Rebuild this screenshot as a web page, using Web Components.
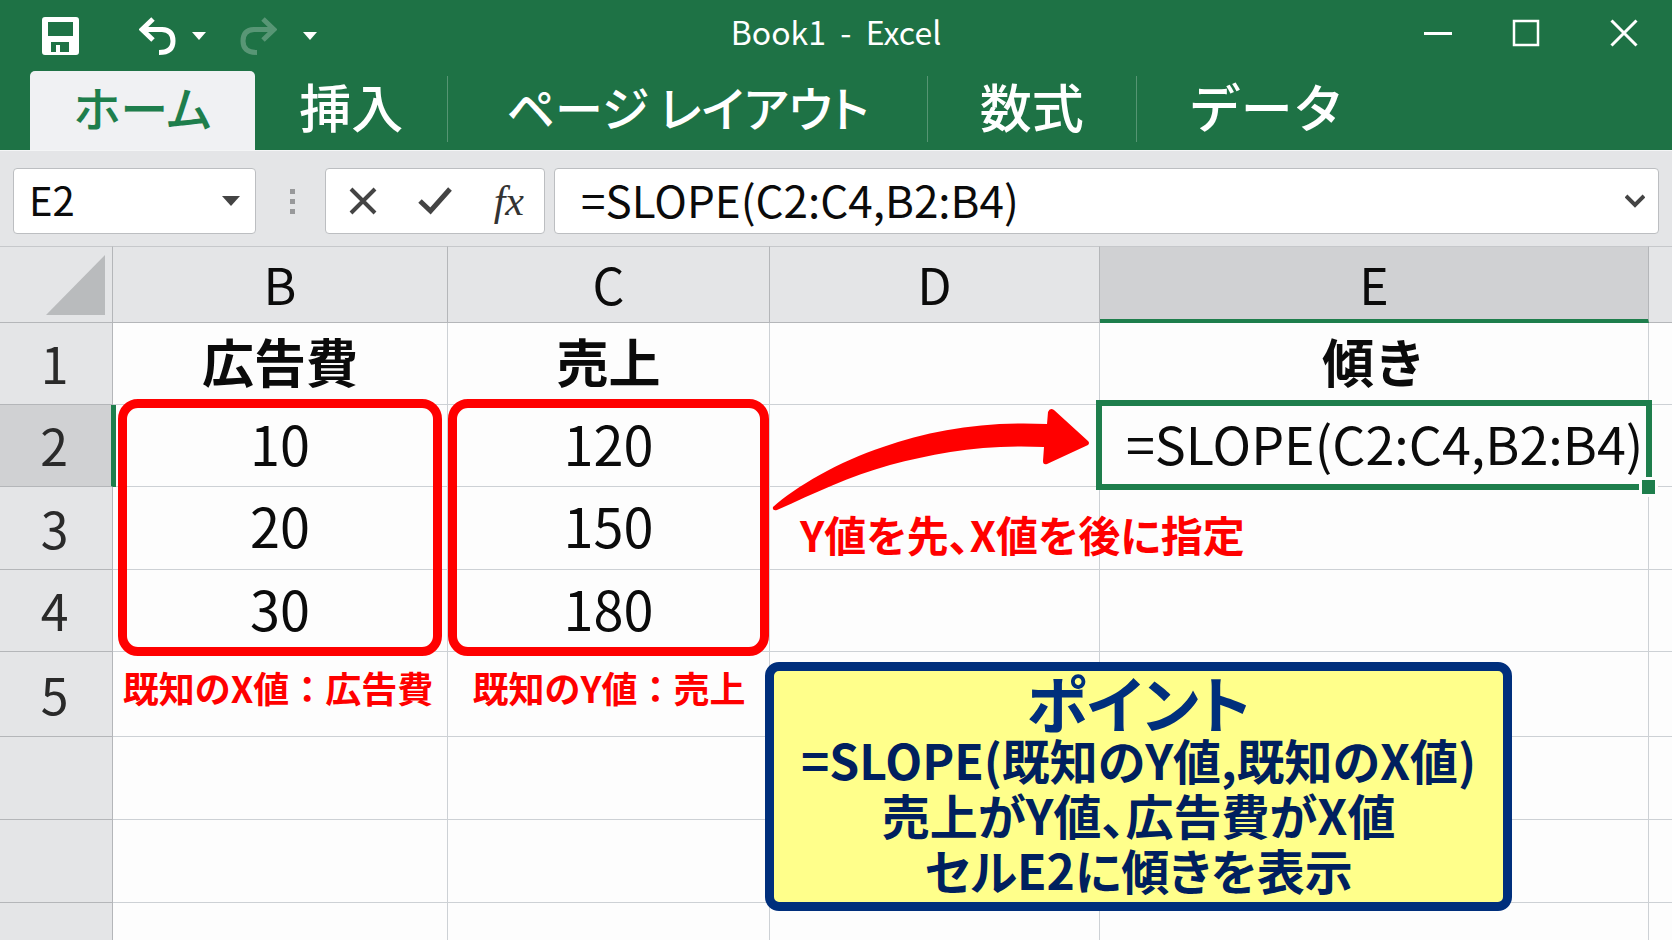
<!DOCTYPE html>
<html lang="ja">
<head>
<meta charset="utf-8">
<meta name="viewport" content="width=device-width, initial-scale=1">
<title>Book1 - Excel</title>
<style>
  * { box-sizing: border-box; }
  body {
    margin: 0;
    height: 100vh;
    overflow: hidden;
    background: #fdfdfd;
    color: #0b0b0b;
    font-family: "Noto Sans CJK JP", "Noto Sans", sans-serif;
    --green: #1e7245;
    --accent: #1e7e4c;
    --chrome: #e4e5e7;
    --chrome-active: #d0d1d3;
    --line: #cdd1d5;
    --line-dark: #b4b6b9;
    --red: #ff0000;
    --navy: #002f7c;
  }
</style>
</head>
<body>
<excel-window>
  <title-bar slot="title">Book1&nbsp; -&nbsp; Excel</title-bar>
  <ribbon-tabs slot="ribbon">
    <ribbon-tab active compact>ホーム</ribbon-tab>
    <ribbon-tab divider>挿入</ribbon-tab>
    <ribbon-tab divider compact class="wide">ページ レイアウト</ribbon-tab>
    <ribbon-tab divider class="medium">数式</ribbon-tab>
    <ribbon-tab class="medium">データ</ribbon-tab>
  </ribbon-tabs>
  <formula-bar slot="formula" cell="E2" value="=SLOPE(C2:C4,B2:B4)"></formula-bar>
  <sheet-grid>
    <range-frame class="x-range"></range-frame>
    <range-frame class="y-range"></range-frame>
    <red-note class="x-note">既知のX値：広告費</red-note>
    <red-note class="y-note">既知のY値：売上</red-note>
    <curved-arrow class="arrow"></curved-arrow>
    <red-note class="order-note" large>Y値を先、X値を後に指定</red-note>
    <active-cell class="active"></active-cell>
    <point-card class="point">
      <span slot="heading">ポイント</span>
      <p>=SLOPE(既知のY値,既知のX値)</p>
      <p>売上がY値、広告費がX値</p>
      <p>セルE2に傾きを表示</p>
    </point-card>
  </sheet-grid>
</excel-window>

<script>
class ExcelWindow extends HTMLElement {
  constructor() {
    super();
    this.attachShadow({ mode: "open" });
    this.shadowRoot.innerHTML = `
      <style>
        :host {
          display: flex;
          flex-direction: column;
          height: 100%;
        }
        header {
          background: var(--green);
        }
        main {
          flex: 1;
          min-height: 0;
          display: flex;
        }
      </style>
      <header>
        <slot name="title"></slot>
        <slot name="ribbon"></slot>
      </header>
      <slot name="formula"></slot>
      <main><slot></slot></main>
    `;
  }
}

class TitleBar extends HTMLElement {
  constructor() {
    super();
    this.attachShadow({ mode: "open" });
    this.shadowRoot.innerHTML = `
      <style>
        :host {
          display: grid;
          grid-template-columns: 1fr auto 1fr;
          align-items: center;
          height: 71px;
          color: #fff;
        }
        .quick, .controls {
          display: flex;
          align-items: center;
        }
        .quick { padding-left: 42px; }
        .controls {
          justify-content: flex-end;
          gap: 60px;
          padding: 0 34px 6px 0;
        }
        h1 {
          margin: 0;
          padding-bottom: 10px;
          font-size: 32px;
          line-height: 40px;
          font-weight: 400;
          white-space: pre;
        }
        button {
          display: block;
          padding: 0;
          border: 0;
          background: none;
          color: inherit;
        }
        svg { display: block; }
        .undo { margin-left: 60px; }
        .redo { margin-left: 34px; opacity: 0.26; }
        .menu { margin-left: 16px; }
        .customize { margin-left: 26px; }
        .close { margin-left: 10px; }
      </style>
      <div class="quick">
        <button aria-label="上書き保存">
          <svg width="37" height="38" viewBox="0 0 37 38">
            <path fill="currentColor" fill-rule="evenodd" d="M3 0H34Q37 0 37 3V35Q37 38 34 38H3Q0 38 0 35V3Q0 0 3 0ZM6 5V19H31V5ZM9 25V35H14V28H18V35H27V25Z"/>
          </svg>
        </button>
        <button class="undo" aria-label="元に戻す">
          <svg width="37" height="38" viewBox="0 0 37 38" fill="none" stroke="currentColor" stroke-width="5">
            <path d="M14 2L3 12.500L14 23M3 12.500H23Q34 13 34 24Q34 35.500 20 35.500"/>
          </svg>
        </button>
        <button class="menu" aria-label="元に戻す履歴">
          <svg width="14" height="8" viewBox="0 0 14 8"><path fill="currentColor" d="M0 0H14L7 8Z"/></svg>
        </button>
        <button class="redo" aria-label="やり直し" disabled>
          <svg width="37" height="38" viewBox="0 0 37 38" fill="none" stroke="currentColor" stroke-width="5">
            <path d="M23 2L34 12.500L23 23M34 12.500H14Q3 13 3 24Q3 35.500 17 35.500"/>
          </svg>
        </button>
        <button class="customize" aria-label="クイック アクセス ツール バーのカスタマイズ">
          <svg width="14" height="8" viewBox="0 0 14 8"><path fill="currentColor" d="M0 0H14L7 8Z"/></svg>
        </button>
      </div>
      <h1><slot></slot></h1>
      <div class="controls">
        <button aria-label="最小化">
          <svg width="28" height="28" viewBox="0 0 28 28"><path fill="currentColor" d="M0 13H28V16H0Z"/></svg>
        </button>
        <button aria-label="最大化">
          <svg width="28" height="28" viewBox="0 0 28 28" fill="none" stroke="currentColor" stroke-width="2.500"><path d="M2 2H26V26H2Z"/></svg>
        </button>
        <button class="close" aria-label="閉じる">
          <svg width="28" height="28" viewBox="0 0 28 28" fill="none" stroke="currentColor" stroke-width="3"><path d="M1.500 1.500L26.500 26.500M26.500 1.500L1.500 26.500"/></svg>
        </button>
      </div>
    `;
  }
}

class RibbonTabs extends HTMLElement {
  constructor() {
    super();
    this.attachShadow({ mode: "open" });
    this.shadowRoot.innerHTML = `
      <style>
        :host { display: block; }
        nav {
          display: flex;
          height: 79px;
          padding-left: 30px;
        }
      </style>
      <nav aria-label="リボン"><slot></slot></nav>
    `;
  }
}

class RibbonTab extends HTMLElement {
  constructor() {
    super();
    this.attachShadow({ mode: "open" });
    this.shadowRoot.innerHTML = `
      <style>
        :host {
          display: flex;
          color: #fff;
        }
        button {
          display: flex;
          align-items: center;
          padding: 0 44px 10px;
          border: 0;
          border-radius: 5px 5px 0 0;
          background: none;
          color: inherit;
          font: inherit;
          font-size: 52px;
          font-weight: 500;
          line-height: 64px;
          white-space: nowrap;
        }
        :host(.medium) button { padding: 0 52px 10px; }
        :host(.wide) button { padding: 0 58px 10px; }
        :host([compact]) button {
          font-size: 48px;
          font-feature-settings: "palt";
        }
        :host([active]) button {
          background: #f0f1f3;
          color: var(--accent);
        }
        i { display: none; }
        :host([divider]) i {
          display: block;
          width: 1px;
          height: 66px;
          margin-top: 5px;
          background: rgba(255, 255, 255, 0.25);
        }
      </style>
      <button><slot></slot></button><i></i>
    `;
  }
}

class FormulaBar extends HTMLElement {
  constructor() {
    super();
    this.attachShadow({ mode: "open" });
  }

  connectedCallback() {
    this.shadowRoot.innerHTML = `
      <style>
        :host {
          display: flex;
          padding: 17px 13px 12px;
          background: var(--chrome);
          border-top: 1px solid #f4f5f6;
        }
        .box {
          display: flex;
          align-items: center;
          box-sizing: border-box;
          height: 66px;
          background: #fff;
          border: 1px solid #bcbec1;
          border-radius: 4px;
          color: #444;
        }
        input {
          min-width: 0;
          flex: 1;
          padding: 0 0 4px;
          border: 0;
          outline: 0;
          background: none;
          color: #0b0b0b;
          font: inherit;
          line-height: 56px;
        }
        button {
          display: block;
          padding: 0;
          border: 0;
          background: none;
          color: inherit;
        }
        svg { display: block; }
        .name {
          width: 243px;
          padding: 0 15px;
          font-size: 40px;
        }
        .grip {
          display: flex;
          flex-direction: column;
          justify-content: center;
          gap: 5px;
          padding: 0 30px 0 34px;
        }
        .grip i {
          width: 5px;
          height: 5px;
          background: #98999b;
        }
        .tools {
          width: 220px;
          justify-content: space-between;
          padding: 0 20px 0 23px;
        }
        .fx {
          color: #333;
          font: italic 42px/44px "Liberation Serif", serif;
        }
        .formula {
          flex: 1;
          margin-left: 9px;
          padding: 0 13px 0 26px;
          font-size: 44px;
        }
      </style>
      <div class="box name">
        <input aria-label="名前ボックス" value="${this.getAttribute("cell")}">
        <button aria-label="名前の一覧">
          <svg width="18" height="10" viewBox="0 0 18 10"><path fill="currentColor" d="M0 0H18L9 10Z"/></svg>
        </button>
      </div>
      <div class="grip"><i></i><i></i><i></i></div>
      <div class="box tools">
        <button aria-label="キャンセル">
          <svg width="28" height="28" viewBox="0 0 28 28" fill="none" stroke="currentColor" stroke-width="4"><path d="M2 2L26 26M26 2L2 26"/></svg>
        </button>
        <button aria-label="入力">
          <svg width="34" height="28" viewBox="0 0 34 28" fill="none" stroke="currentColor" stroke-width="5"><path d="M2 14L12.500 24L32 2"/></svg>
        </button>
        <button class="fx" aria-label="関数の挿入">fx</button>
      </div>
      <div class="box formula">
        <input aria-label="数式バー" value="${this.getAttribute("value")}">
        <button aria-label="数式バーの展開">
          <svg width="20" height="14" viewBox="0 0 20 14" fill="none" stroke="currentColor" stroke-width="4"><path d="M1 2L10 11L19 2"/></svg>
        </button>
      </div>
    `;
  }
}

class SheetGrid extends HTMLElement {
  constructor() {
    super();
    this.attachShadow({ mode: "open" });
    this.columns = ["B", "C", "D", "E", ""];
    this.rows = [
      ["1", "広告費", "売上", "", "傾き", ""],
      ["2", "10", "120", "", "=SLOPE(C2:C4,B2:B4)", ""],
      ["3", "20", "150", "", "", ""],
      ["4", "30", "180", "", "", ""],
      ["5", "", "", "", "", ""],
      ["", "", "", "", "", ""],
      ["", "", "", "", "", ""],
      ["", "", "", "", "", ""]
    ];
  }

  connectedCallback() {
    this.render();
  }

  render() {
    this.shadowRoot.innerHTML = `
      <style>
        :host {
          display: grid;
          flex: 1;
          min-width: 0;
          overflow: hidden;
        }
        /* The table and the annotation layer share one set of tracks */
        table, .layer {
          grid-area: 1 / 1;
          display: grid;
          grid-template-columns:
            minmax(0, 113fr) minmax(0, 335fr) minmax(0, 322fr)
            minmax(0, 330fr) minmax(0, 549fr) minmax(0, 23fr);
          grid-template-rows: 77px 82px 82px 83px 82px 85px 83px 83px minmax(0, 1fr);
        }
        .layer {
          position: relative;
          pointer-events: none;
        }
        thead, tbody, tr { display: contents; }
        th, td {
          display: flex;
          align-items: center;
          justify-content: center;
          min-width: 0;
          padding: 0;
          border: solid var(--line);
          border-width: 0 1px 1px 0;
          box-sizing: border-box;
          white-space: nowrap;
          font-weight: 400;
          line-height: 64px;
        }
        tr > :last-child { border-right: 0; }
        tbody tr:last-child > * { border-bottom: 0; }
        th {
          padding-bottom: 3px;
          background: var(--chrome);
          border-color: var(--line-dark);
          font-size: 50px;
        }
        thead th { border-top: 1px solid #c6c8cb; }
        tbody th { color: #2a2a2a; padding-right: 3px; }
        td {
          font-size: 54px;
          padding-bottom: 6px;
        }
        .title {
          font-size: 52px;
          font-weight: 700;
        }
        .column-on {
          padding-bottom: 0;
          background: var(--chrome-active);
          border-bottom: 4px solid var(--accent);
        }
        .row-on {
          z-index: 1;
          background: var(--chrome-active);
          border-right: 2px solid var(--accent);
          box-shadow: 3px 0 0 var(--accent);
        }
        .formula {
          justify-content: flex-start;
          padding-left: 26px;
          font-size: 52px;
        }
        .corner {
          align-items: flex-end;
          justify-content: flex-end;
          padding: 0 7px 7px 0;
        }
        .corner svg { display: block; }
        ::slotted(.x-range) { grid-area: 3 / 2 / 6 / 3; margin: -6px 6px -4px 5px; }
        ::slotted(.y-range) { grid-area: 3 / 3 / 6 / 4; margin: -6px 1px -4px 0; }
        ::slotted(.x-note) { grid-area: 6 / 2; margin-right: 5px; }
        ::slotted(.y-note) { grid-area: 6 / 3; }
        ::slotted(.arrow) { grid-area: 3 / 4 / 5 / 5; }
        ::slotted(.order-note) { grid-area: 4 / 4 / 5 / 6; justify-self: start; margin-left: 30px; }
        ::slotted(.active) { grid-area: 3 / 5; margin: -5px -3px -3px -4px; }
        ::slotted(.point) { grid-area: 6 / 4 / 10 / 6; place-self: start; margin: 10px 0 0 -5px; }
      </style>
      <table>
        <thead>
          <tr>
            <th class="corner" scope="col" aria-label="すべて選択">
              <svg width="59" height="60" viewBox="0 0 59 60"><path fill="#b9bbbd" d="M59 0V60H0Z"/></svg>
            </th>
            ${this.columns
              .map((name) => `<th scope="col" class="${name === "E" ? "column-on" : ""}">${name}</th>`)
              .join("")}
          </tr>
        </thead>
        <tbody>
          ${this.rows.map((row, index) => this.renderRow(row, index)).join("")}
        </tbody>
      </table>
      <div class="layer"><slot></slot></div>
    `;
  }

  renderRow([name, ...cells], index) {
    const kind = (text) => (index === 0 ? "title" : text.startsWith("=") ? "formula" : "");
    return `
      <tr>
        <th scope="row" class="${name === "2" ? "row-on" : ""}">${name}</th>
        ${cells.map((text) => `<td class="${kind(text)}">${text}</td>`).join("")}
      </tr>
    `;
  }
}

class RangeFrame extends HTMLElement {
  constructor() {
    super();
    this.attachShadow({ mode: "open" });
    this.shadowRoot.innerHTML = `
      <style>
        :host {
          display: block;
          border: 9px solid var(--red);
          border-radius: 20px;
        }
      </style>
    `;
  }
}

class RedNote extends HTMLElement {
  constructor() {
    super();
    this.attachShadow({ mode: "open" });
    this.shadowRoot.innerHTML = `
      <style>
        :host {
          display: block;
          padding-top: 9px;
          color: var(--red);
          font-size: 36px;
          font-weight: 700;
          line-height: 52px;
          text-align: center;
          white-space: nowrap;
        }
        :host([large]) {
          padding-top: 21px;
          font-size: 42px;
          font-feature-settings: "palt";
        }
      </style>
      <slot></slot>
    `;
  }
}

class CurvedArrow extends HTMLElement {
  constructor() {
    super();
    this.attachShadow({ mode: "open" });
    this.shadowRoot.innerHTML = `
      <style>
        :host { display: block; }
        svg { display: block; width: 100%; height: auto; }
      </style>
      <svg viewBox="770 405 330 110" aria-hidden="true">
        <path fill="#ff0000" d="M773 507C795 487 840 461 883 447C930 430 985 421 1047 424L1048 412Q1050 407 1054 410L1088 441Q1090 443 1088 445L1047 464Q1043 465 1043 461L1044 447C985 444 935 453 890 465C850 476 815 493 777 510Q772 511 773 507Z"/>
      </svg>
    `;
  }
}

class ActiveCell extends HTMLElement {
  constructor() {
    super();
    this.attachShadow({ mode: "open" });
    this.shadowRoot.innerHTML = `
      <style>
        :host {
          display: block;
          position: relative;
          border: 6px solid var(--accent);
        }
        i {
          position: absolute;
          right: -12px;
          bottom: -13px;
          width: 13px;
          height: 14px;
          background: var(--accent);
          border: 3px solid #fdfdfd;
        }
      </style>
      <i></i>
    `;
  }
}

class PointCard extends HTMLElement {
  constructor() {
    super();
    this.attachShadow({ mode: "open" });
    this.shadowRoot.innerHTML = `
      <style>
        :host {
          display: block;
          padding: 1px 27px 5px;
          border: 9px solid var(--navy);
          border-radius: 14px;
          background: #ffff8b;
          color: #00205e;
          font-size: 48px;
          font-weight: 700;
          line-height: 55px;
          text-align: center;
          white-space: nowrap;
          font-feature-settings: "palt";
        }
        h2 {
          margin: 0;
          color: var(--navy);
          font-size: 62px;
          line-height: 60px;
        }
        ::slotted(p) { margin: 0; }
      </style>
      <h2><slot name="heading"></slot></h2>
      <slot></slot>
    `;
  }
}

customElements.define("excel-window", ExcelWindow);
customElements.define("title-bar", TitleBar);
customElements.define("ribbon-tabs", RibbonTabs);
customElements.define("ribbon-tab", RibbonTab);
customElements.define("formula-bar", FormulaBar);
customElements.define("sheet-grid", SheetGrid);
customElements.define("range-frame", RangeFrame);
customElements.define("red-note", RedNote);
customElements.define("curved-arrow", CurvedArrow);
customElements.define("active-cell", ActiveCell);
customElements.define("point-card", PointCard);
</script>
</body>
</html>
